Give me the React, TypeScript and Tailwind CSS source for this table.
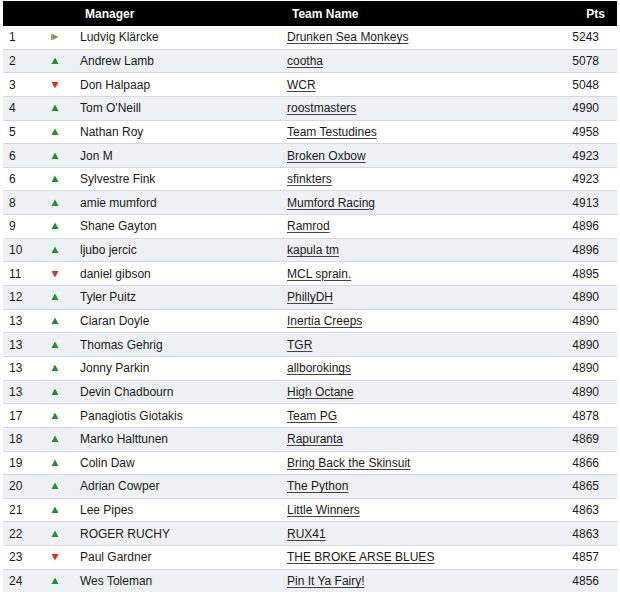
type Move = "up" | "down" | "same";

const rows: [string, Move, string, string, number][] = [
  ["1", "same", "Ludvig Klärcke", "Drunken Sea Monkeys", 5243],
  ["2", "up", "Andrew Lamb", "cootha", 5078],
  ["3", "down", "Don Halpaap", "WCR", 5048],
  ["4", "up", "Tom O'Neill", "roostmasters", 4990],
  ["5", "up", "Nathan Roy", "Team Testudines", 4958],
  ["6", "up", "Jon M", "Broken Oxbow", 4923],
  ["6", "up", "Sylvestre Fink", "sfinkters", 4923],
  ["8", "up", "amie mumford", "Mumford Racing", 4913],
  ["9", "up", "Shane Gayton", "Ramrod", 4896],
  ["10", "up", "ljubo jercic", "kapula tm", 4896],
  ["11", "down", "daniel gibson", "MCL sprain.", 4895],
  ["12", "up", "Tyler Puitz", "PhillyDH", 4890],
  ["13", "up", "Ciaran Doyle", "Inertia Creeps", 4890],
  ["13", "up", "Thomas Gehrig", "TGR", 4890],
  ["13", "up", "Jonny Parkin", "allborokings", 4890],
  ["13", "up", "Devin Chadbourn", "High Octane", 4890],
  ["17", "up", "Panagiotis Giotakis", "Team PG", 4878],
  ["18", "up", "Marko Halttunen", "Rapuranta", 4869],
  ["19", "up", "Colin Daw", "Bring Back the Skinsuit", 4866],
  ["20", "up", "Adrian Cowper", "The Python", 4865],
  ["21", "up", "Lee Pipes", "Little Winners", 4863],
  ["22", "up", "ROGER RUCHY", "RUX41", 4863],
  ["23", "down", "Paul Gardner", "THE BROKE ARSE BLUES", 4857],
  ["24", "up", "Wes Toleman", "Pin It Ya Fairy!", 4856],
];

const Arrow = ({ move }: { move: Move }) => {
  if (move === "same")
    return (
      <svg width="8" height="8" viewBox="0 0 8 8">
        <rect x="0" y="1" width="1.5" height="6" fill="#9a9a6a" />
        <path d="M1.5 1 L7.5 4 L1.5 7 Z" fill="#8c8c52" />
      </svg>
    );
  if (move === "down")
    return (
      <svg width="8" height="8" viewBox="0 0 8 8">
        <path d="M0.5 1 L7.5 1 L4 7.5 Z" fill="#e0301e" />
      </svg>
    );
  return (
    <svg width="8" height="8" viewBox="0 0 8 8">
      <path d="M4 0.5 L7.5 7 L0.5 7 Z" fill="#2a8c2a" />
    </svg>
  );
};

const App = () => {
  return (
    <div className="w-[620px] h-[592px] bg-white px-[3px] pt-[1px] overflow-hidden text-[12px] text-[#1a1a1a]" style={{ fontFamily: "Arial, 'Liberation Sans', sans-serif" }}>
      <div className="grid grid-cols-[42px_35px_207px_1fr_90px] h-[25px] items-center bg-black text-white font-bold">
        <div />
        <div />
        <div className="pl-[5px]">Manager</div>
        <div className="pl-[5px]">Team Name</div>
        <div className="text-right pr-[12px]">Pts</div>
      </div>
      {rows.map(([rank, move, manager, team, pts], i) => (
        <div
          key={i}
          className={`grid grid-cols-[42px_35px_207px_1fr_90px] h-[23.65px] items-center border-b border-[#d6d9de] ${i % 2 === 1 ? "bg-[#edf0f4]" : "bg-white"}`}
        >
          <div className="pl-[6px]">{rank}</div>
          <div className="pl-[6px] flex items-center">
            <Arrow move={move} />
          </div>
          <div>{manager}</div>
          <div>
            <span className="underline underline-offset-2 decoration-[#444]">{team}</span>
          </div>
          <div className="text-right pr-[18px]">{pts}</div>
        </div>
      ))}
    </div>
  );
};

export default App;
